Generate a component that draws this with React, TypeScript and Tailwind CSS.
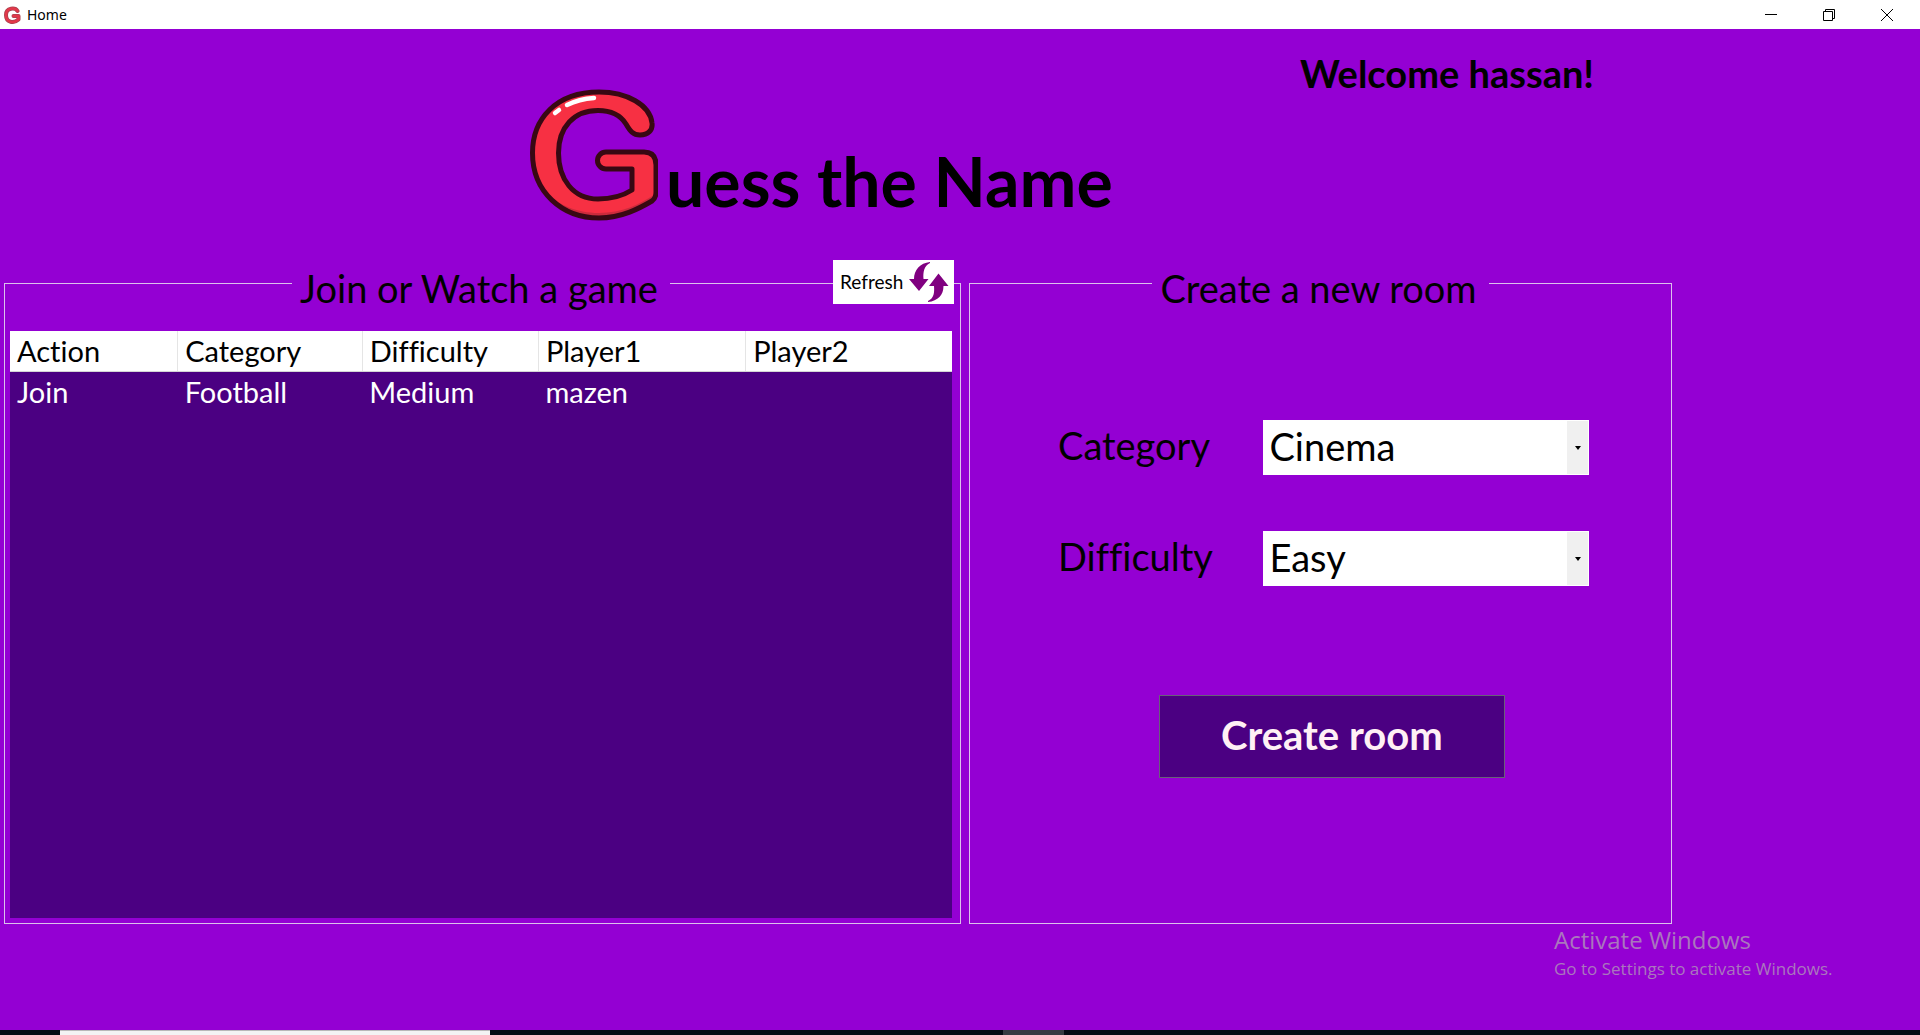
import { useState } from "react";

const games = [
  { action: "Join", category: "Football", difficulty: "Medium", player1: "mazen", player2: "" },
];

function LetterG({ className }: { className: string }) {
  return (
    <svg viewBox="0 0 128 132" className={className} aria-hidden="true">
      <path
        d="M122 34C120 16 97 3 69 3C26 3 2.500 30 2.500 64C2.500 103 32 129 69 129C92 129 110 119 122 112Q126 109 126 103V76Q126 63 114 63H76A8.500 8.500 0 0 0 76 80H102V101C91 108 80 110 68 110C43 110 28.500 90 28.500 64C28.500 38 44 21.500 68 21.500C83 21.500 91 27 96 35C100 42 103 46 110 46C118 46 123 41 122 34Z"
        fill="#f73043"
      />
      <path d="M12 98C25 116 47 124 69 124C92 124 110 115 124 106L122 112C110 119 92 129 69 129C44 129 22 117 12 98Z" fill="#cc2b3c" />
      <path
        d="M122 34C120 16 97 3 69 3C26 3 2.500 30 2.500 64C2.500 103 32 129 69 129C92 129 110 119 122 112Q126 109 126 103V76Q126 63 114 63H76A8.500 8.500 0 0 0 76 80H102V101C91 108 80 110 68 110C43 110 28.500 90 28.500 64C28.500 38 44 21.500 68 21.500C83 21.500 91 27 96 35C100 42 103 46 110 46C118 46 123 41 122 34Z"
        fill="none"
        stroke="#380813"
        strokeWidth="5"
        strokeLinejoin="round"
      />
      <path d="M37 16Q49 10 64 9M25 24L29 21" fill="none" stroke="#fff" strokeWidth="4.500" strokeLinecap="round" />
    </svg>
  );
}

function RefreshArrows() {
  return (
    <svg viewBox="0 0 40 40" className="size-10 shrink-0" fill="#800080" aria-hidden="true">
      <path d="M21 0C11 1 5 8 5 17H0L10 29L19.500 17H14.500C14 10 15 4 21 1Z" />
      <path d="M19 40C29 39 34.500 33 34.500 24H39.500L29.500 11.500L20 24H25C25.500 31 25 36 19 39Z" />
    </svg>
  );
}

function TitleBar() {
  return (
    <div className="flex h-[29px] items-center bg-white font-['Noto_Sans'] text-black">
      <svg viewBox="0 0 18 18" className="ml-[3px] size-[18px]" fill="none" strokeLinecap="round" strokeLinejoin="round" aria-hidden="true">
        <path d="M14.500 5C12.500 1.500 3 1 3 9S11 17.500 15.500 13.500V10H10.500" stroke="#a8434f" strokeWidth="4" />
        <path d="M14.500 5C12.500 1.500 3 1 3 9S11 17.500 15.500 13.500V10H10.500" stroke="#e2384a" strokeWidth="2.500" />
      </svg>
      <span className="ml-1.5 flex-1 text-[14px]">Home</span>
      <button aria-label="Minimize" className="flex h-full w-[58px] items-center justify-center">
        <svg width="12" height="12" aria-hidden="true"><path d="M0 5.500H12" stroke="#000" /></svg>
      </button>
      <button aria-label="Restore" className="flex h-full w-[58px] items-center justify-center">
        <svg width="12" height="12" fill="none" stroke="#000" aria-hidden="true">
          <path d="M.5 2.500H9.500V11.500H.5ZM2.500 2.500V.5H11.500V9.500H9.500" />
        </svg>
      </button>
      <button aria-label="Close" className="mr-1 flex h-full w-[58px] items-center justify-center">
        <svg width="12" height="12" stroke="#000" aria-hidden="true"><path d="M0 0L12 12M12 0L0 12" /></svg>
      </button>
    </div>
  );
}

function Field({ id, label, options }: { id: string; label: string; options: string[] }) {
  const [value, setValue] = useState(options[0]);
  return (
    <div className="flex items-center">
      <label htmlFor={id} className="w-[38.7%] pb-1.5 text-[38px] leading-[48px]">{label}</label>
      <div className="relative flex-1">
        <select
          id={id}
          value={value}
          onChange={(e) => setValue(e.target.value)}
          className="block h-[55px] w-full appearance-none bg-white pb-1 pl-1.5 text-[38px] leading-[48px] text-black"
        >
          {options.map((o) => <option key={o}>{o}</option>)}
        </select>
        <span className="pointer-events-none absolute inset-y-px right-px flex w-[21px] items-center justify-center bg-[#f0f0f0]">
          <svg width="6" height="4" aria-hidden="true"><path d="M0 0H6L3 4Z" /></svg>
        </span>
      </div>
    </div>
  );
}

export default function App() {
  return (
    <div className="flex min-h-screen flex-col bg-[#9400d3] font-[Lato,sans-serif] text-black [font-variant-ligatures:none]">
      <TitleBar />
      <header className="grid h-[234px] grid-cols-[530fr_770fr_620fr]">
        <h1 className="col-start-2 mt-[60px] flex h-[132px] items-end whitespace-nowrap text-[68px] font-bold leading-[72px]">
          <LetterG className="mr-2 h-[132px] w-32" />
          <span className="pb-1">uess the Name</span>
        </h1>
        <p className="mt-5 text-[38px] font-bold leading-[48px]">Welcome hassan!</p>
      </header>

      <main className="grid flex-1 grid-cols-[957fr_703fr_240fr] gap-x-2 pb-[106px] pl-1">
        <fieldset className="relative flex min-w-0 flex-col border border-[#dcc0ec] pr-2 pb-[5px] pl-[5px]">
          <legend className="mx-auto h-10 pr-3 pl-2 text-[38px] leading-[50px]">Join or Watch a game</legend>
          <button className="absolute -top-[43px] right-1.5 flex h-11 w-[121px] items-center justify-between bg-white pr-[5px] pl-[7px] text-[19px]">
            Refresh
            <RefreshArrows />
          </button>
          <div className="mt-7 flex-1 bg-[#4b0082]">
            <table className="w-full table-fixed text-left text-[29px] leading-[40px]">
              <colgroup>
                <col className="w-[17.8%]" />
                <col className="w-[19.6%]" />
                <col className="w-[18.7%]" />
                <col className="w-[22%]" />
                <col />
              </colgroup>
              <thead className="bg-white">
                <tr>
                  {["Action", "Category", "Difficulty", "Player1", "Player2"].map((h) => (
                    <th key={h} className="border-r border-b border-r-[#e5e5e5] border-b-[#d5d5d5] px-[7px] font-normal last:border-r-0">{h}</th>
                  ))}
                </tr>
              </thead>
              <tbody className="text-white">
                {games.map((g) => (
                  <tr key={g.player1}>
                    <td className="px-[7px]">{g.action}</td>
                    <td className="px-[7px]">{g.category}</td>
                    <td className="px-[7px]">{g.difficulty}</td>
                    <td className="px-[7px]">{g.player1}</td>
                    <td className="px-[7px]">{g.player2}</td>
                  </tr>
                ))}
              </tbody>
            </table>
          </div>
        </fieldset>

        <fieldset className="min-w-0 border border-[#dcc0ec]">
          <legend className="mx-auto h-10 pr-3 pl-2 text-[38px] leading-[50px]">Create a new room</legend>
          <div className="pt-[117px] pr-[82px] pl-[88px]">
            <div className="flex flex-col gap-14">
              <Field id="category" label="Category" options={["Cinema", "Football"]} />
              <Field id="difficulty" label="Difficulty" options={["Easy", "Medium", "Hard"]} />
            </div>
            <button className="mt-[109px] ml-[19%] block h-[83px] w-[346px] border border-[#69607a] bg-[#4b0082] pb-1 text-[40px] font-bold text-[#fff0f5]">
              Create room
            </button>
          </div>
        </fieldset>
      </main>

      <aside className="pointer-events-none absolute right-20 bottom-[53px] w-[286px] whitespace-nowrap font-['Open_Sans',sans-serif] text-[#aa77bd]">
        <p className="text-[24px] leading-[32px]">Activate Windows</p>
        <p className="text-[17px] leading-[26px]">Go to Settings to activate Windows.</p>
      </aside>

      <footer className="grid h-[5px] grid-cols-[60fr_430fr_513fr_61fr_856fr] bg-[#060b14]">
        <div className="col-start-2 border-t border-[#b8b8b8] bg-[#f3f3f3]" />
        <div className="col-start-4 bg-[#373b42]" />
      </footer>
    </div>
  );
}
